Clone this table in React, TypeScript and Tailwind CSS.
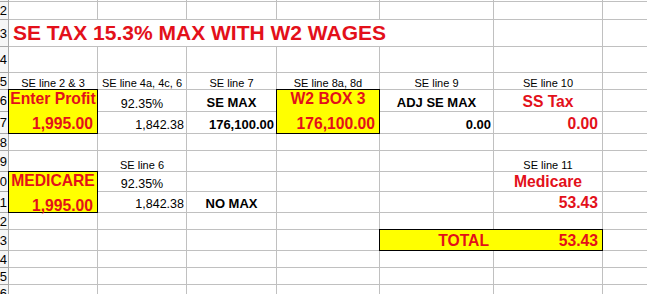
import React from "react";

type Cell = { t: string; c: string };

// text styles
const lbl = "justify-center text-[11px] text-black";
const pct = "justify-center text-[12.5px] text-black pb-[1px]";
const amt = "justify-end pr-[2px] text-[12.5px] text-black pb-[2px]";
const bold = "justify-center text-[13px] font-bold text-black pb-[2px]";
const boldAmt = "justify-end pr-[2px] text-[13px] font-bold text-black pb-[2px]";
const red = "justify-center text-[15.7px] font-bold text-[#e3101a] pb-[1px]";
const redAmt = "justify-end pr-[4px] text-[15.7px] font-bold text-[#e3101a] pb-[1px]";

const cells: Record<string, Cell> = {
  "5-2": { t: "SE line 2 & 3", c: lbl },
  "5-3": { t: "SE line 4a, 4c, 6", c: lbl },
  "5-4": { t: "SE line 7", c: lbl },
  "5-5": { t: "SE line 8a, 8d", c: lbl },
  "5-6": { t: "SE line 9", c: lbl },
  "5-7": { t: "SE line 10", c: lbl },
  "6-3": { t: "92.35%", c: pct },
  "6-4": { t: "SE MAX", c: bold },
  "6-6": { t: "ADJ SE MAX", c: bold },
  "6-7": { t: "SS Tax", c: red },
  "7-3": { t: "1,842.38", c: amt },
  "7-4": { t: "176,100.00", c: boldAmt },
  "7-6": { t: "0.00", c: boldAmt },
  "7-7": { t: "0.00", c: redAmt },
  "9-3": { t: "SE line 6", c: lbl },
  "9-7": { t: "SE line 11", c: lbl },
  "10-3": { t: "92.35%", c: pct },
  "10-7": { t: "Medicare", c: red },
  "11-3": { t: "1,842.38", c: amt },
  "11-4": { t: "NO MAX", c: bold },
  "11-7": { t: "53.43", c: redAmt },
};

// cells hidden under merged / filled blocks
const covered = new Set([
  "3-2", "3-3", "3-4", "3-5", "3-6",
  "6-2", "7-2", "6-5", "7-5",
  "10-2", "11-2",
  "13-6", "13-7",
]);

const ROWS = 16;
const COLS = 8;

function YellowPair({ pos, top, bottom }: { pos: string; top: string; bottom: string }) {
  return (
    <div className={`${pos} relative z-10 -mt-px -ml-px flex flex-col border border-black bg-[#ffff00]`}>
      <div className={`flex h-[22px] items-end ${red}`}>{top}</div>
      <div className={`flex flex-1 items-end ${redAmt}`}>{bottom}</div>
    </div>
  );
}

export default function App() {
  const grid: React.ReactNode[] = [];
  for (let r = 1; r <= ROWS; r++) {
    for (let c = 1; c <= COLS; c++) {
      const key = `${r}-${c}`;
      if (covered.has(key)) continue;
      if (c === 1) {
        // row headers, mostly scrolled off to the left
        grid.push(
          <div
            key={key}
            className="flex items-center justify-end overflow-hidden border-b border-r border-[#a8a8a8] bg-[#f6f6f6] pr-px text-[13px] leading-none text-black"
          >
            {r > 1 ? r : ""}
          </div>
        );
        continue;
      }
      const cell = cells[key];
      grid.push(
        <div
          key={key}
          className={`flex items-end whitespace-nowrap border-b border-r border-[#c0c0c0] leading-none ${cell ? cell.c : ""}`}
        >
          {cell?.t}
        </div>
      );
    }
  }

  return (
    <div className="h-[294px] w-[647px] overflow-hidden bg-white font-['Liberation_Sans',Arial,sans-serif]">
      <div
        className="
          grid
          grid-cols-[9px_89px_89px_90px_103px_114px_109px_60px]
          grid-rows-[2px_18px_27px_26px_17px_22px_22px_17px_21px_20px_21px_17px_21px_17px_17px_17px]
        "
      >
        {grid}

        {/* title, overflowing across B..F */}
        <div className="col-start-2 col-span-5 row-start-3 flex items-end whitespace-nowrap border-b border-r border-[#c0c0c0] pb-[3px] pl-[4px] text-[21px] font-bold leading-none text-[#e3101a]">
          SE TAX 15.3% MAX WITH W2 WAGES
        </div>

        <YellowPair pos="col-start-2 row-start-6 row-span-2" top="Enter Profit" bottom="1,995.00" />
        <YellowPair pos="col-start-5 row-start-6 row-span-2" top="W2 BOX 3" bottom="176,100.00" />
        <YellowPair pos="col-start-2 row-start-10 row-span-2" top="MEDICARE" bottom="1,995.00" />

        {/* total bar */}
        <div className="relative z-10 col-start-6 col-span-2 row-start-13 -mt-px -ml-px flex border border-black bg-[#ffff00] leading-none">
          <div className={`flex w-[113px] items-end ${redAmt}`}>TOTAL</div>
          <div className={`flex flex-1 items-end ${redAmt}`}>53.43</div>
        </div>
      </div>
    </div>
  );
}
